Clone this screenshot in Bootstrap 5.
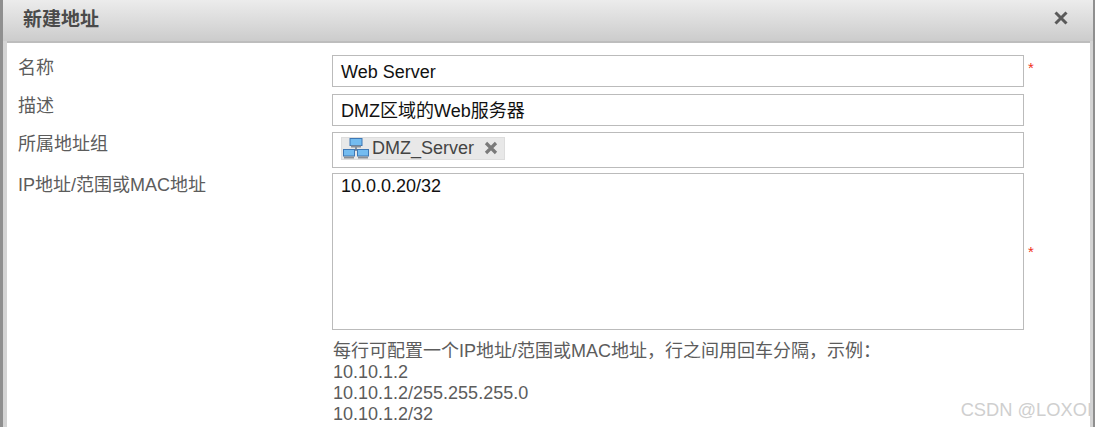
<!DOCTYPE html>
<html lang="zh-CN">
<head>
  <meta charset="UTF-8" />
  <meta name="viewport" content="width=device-width, initial-scale=1.0"/>
  <title>新建地址</title>
  <link href="https://cdn.jsdelivr.net/npm/bootstrap@5.3.3/dist/css/bootstrap.min.css" rel="stylesheet">
  <style>
    html, body {
      height: 427px;
      overflow: hidden;
    }

    body {
      background: #fff;
      font-family: "Liberation Sans", "Noto Sans CJK SC", sans-serif;
      font-size: 18px;
      color: #5c5c5c;
    }

    .dlg-frame {
      height: 427px;
      border-left: 3px solid #8f8f8f;
      border-right: 2px solid #8f8f8f;
      margin-right: 1px;
      background: #d4d4d4;
      padding: 0 3px 0 4px;
      position: relative;
      overflow: hidden;
    }

    .dlg-head {
      height: 41px;
      margin: 0 -3px 0 -4px;
      padding: 0 25px 0 20px;
      background: linear-gradient(to bottom, #ececec, #cccccc);
    }

    .dlg-title {
      font-size: 19px;
      font-weight: bold;
      color: #4a4a4a;
    }

    .dlg-close {
      margin-bottom: 5px;
    }

    .dlg-body {
      background: #fff;
      height: 386px;
      border-top: 2px solid #bdbdbd;
      padding-top: 12px;
    }

    .lbl-col {
      width: 325px;
      padding-left: 11px;
      flex-shrink: 0;
      line-height: 24px;
    }

    .row-a .lbl-col {
      padding-top: 1px;
    }

    .fld-col {
      width: 692px;
      flex-shrink: 0;
    }

    .fld-box {
      border: 1px solid #bbb;
      padding: 0 8px;
      font-size: 18px;
      height: 32px;
      line-height: 32px;
      color: #111;
      background: #fff;
    }

    .row-a { margin-bottom: 7px; }
    .row-b { margin-bottom: 6px; }
    .row-c { margin-bottom: 5px; }
    .row-c .fld-box {
      height: 36px;
      padding-bottom: 3px;
    }

    .area-box {
      height: 157px;
      line-height: 25px;
    }

    .req-mark {
      color: #f03020;
      font-size: 15px;
      line-height: 24px;
      margin-left: 4px;
      margin-top: 1px;
    }

    .area-req {
      margin-top: 67px;
    }

    .tag-chip {
      background: #e8e8e8;
      border: 1px solid #ddd;
      color: #444;
      height: 23px;
      line-height: 21px;
      padding: 0 6px 1px 0;
    }

    .tag-ico {
      margin-right: 2px;
    }

    .tag-x {
      width: 14px;
      height: 14px;
      margin-left: 10px;
    }

    .hint-txt {
      font-size: 18px;
      line-height: 21px;
      color: #5c5c5c;
      margin-top: 11px;
      padding-left: 1px;
    }

    .wm-txt {
      position: absolute;
      right: 1px;
      top: 399px;
      font-size: 18.3px;
      color: #cfcfcf;
      line-height: 22px;
    }
  </style>
</head>
<body>
  <div class="dlg-frame">
    <div class="dlg-head d-flex align-items-center justify-content-between">
      <span class="dlg-title">新建地址</span>
      <svg class="dlg-close" width="14" height="14" viewBox="0 0 14 14"><path d="M1.5 1.5 12.5 12.5M12.5 1.5 1.5 12.5" stroke="#5a5a5a" stroke-width="3"/></svg>
    </div>
    <div class="dlg-body">
      <div class="d-flex row-a">
        <div class="lbl-col">名称</div>
        <div class="fld-col fld-box">Web Server</div>
        <span class="req-mark">*</span>
      </div>
      <div class="d-flex row-b">
        <div class="lbl-col">描述</div>
        <div class="fld-col fld-box">DMZ区域的Web服务器</div>
      </div>
      <div class="d-flex row-c">
        <div class="lbl-col">所属地址组</div>
        <div class="fld-col fld-box d-flex align-items-center">
          <span class="tag-chip d-inline-flex align-items-center">
            <svg class="tag-ico" width="28" height="22" viewBox="0 0 28 22">
              <path d="M14 8V13M7 13H21V15M7 13V15" stroke="#5f7690" fill="none" stroke-width="1.5"/>
              <rect x="8" y="1.5" width="12" height="7" fill="#74bcf0" stroke="#3f78b5"/>
              <rect x="1.5" y="12.5" width="11" height="6.5" fill="#74bcf0" stroke="#3f78b5"/>
              <rect x="15.5" y="12.5" width="11" height="6.5" fill="#74bcf0" stroke="#3f78b5"/>
              <path d="M9 9.5H19M2 20.5H12M16 20.5H26" stroke="#8a8f96" stroke-width="2"/>
            </svg>
            DMZ_Server
            <svg class="tag-x" viewBox="0 0 14 14"><path d="M2 2 12 12M12 2 2 12" stroke="#7a7a7a" stroke-width="3.2"/></svg>
          </span>
        </div>
      </div>
      <div class="d-flex">
        <div class="lbl-col">IP地址/范围或MAC地址</div>
        <div class="fld-col">
          <div class="fld-box area-box">10.0.0.20/32</div>
          <div class="hint-txt">每行可配置一个IP地址/范围或MAC地址，行之间用回车分隔，示例：<br>10.10.1.2<br>10.10.1.2/255.255.255.0<br>10.10.1.2/32</div>
        </div>
        <span class="req-mark area-req">*</span>
      </div>
    </div>
    <div class="wm-txt">CSDN @LOXOI</div>
  </div>
  <script src="https://cdn.jsdelivr.net/npm/bootstrap@5.3.3/dist/js/bootstrap.bundle.min.js"></script>
</body>
</html>
